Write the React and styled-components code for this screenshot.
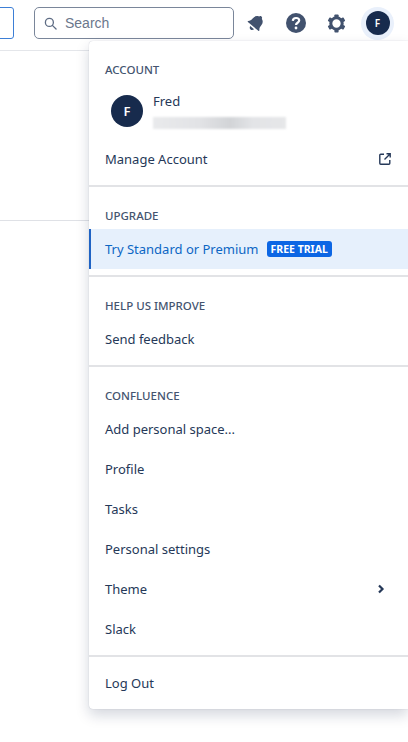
import React from "react";
import styled, { createGlobalStyle } from "styled-components";

const GlobalStyle = createGlobalStyle`
  html, body { margin: 0; padding: 0; background: #fff; }
  body { font-family: "Noto Sans", "Open Sans", "Liberation Sans", sans-serif; color: #253858; }
`;

const Page = styled.div`
  position: relative;
  width: 408px;
  height: 742px;
  overflow: hidden;
  background: #fff;
`;

const TopBar = styled.header`
  display: flex;
  align-items: flex-start;
  height: 43px;
  padding-top: 7px;
  border-bottom: 1px solid #e4e6ea;
`;

const CreateButton = styled.div`
  width: 80px;
  height: 30px;
  margin-left: -68px;
  flex: none;
  border: 1px solid #3d7fd6;
  border-radius: 3px;
`;

const SearchBox = styled.div`
  display: flex;
  align-items: center;
  gap: 8px;
  width: 200px;
  height: 32px;
  margin-left: 20px;
  padding-left: 9px;
  flex: none;
  box-sizing: border-box;
  border: 1px solid #7a869a;
  border-radius: 5px;
  font-family: "Liberation Sans", sans-serif;
  font-size: 14px;
  color: #6b778c;
`;

const IconGroup = styled.div`
  display: flex;
  align-items: center;
  height: 32px;
  margin-left: 10px;
  gap: 16px;
`;

const IconSlot = styled.span`
  display: flex;
  align-items: center;
  justify-content: center;
  width: 24px;
  height: 24px;
`;

const ProfileRing = styled.div`
  display: flex;
  align-items: center;
  justify-content: center;
  width: 33px;
  height: 33px;
  margin-left: -3px;
  border-radius: 50%;
  background: #e9f0fb;
`;

const Avatar = styled.div`
  display: flex;
  align-items: center;
  justify-content: center;
  width: ${(p) => p.$size}px;
  height: ${(p) => p.$size}px;
  border-radius: 50%;
  background: #172b4d;
  color: #fff;
  font-weight: 600;
  font-size: ${(p) => p.$font}px;
  flex: none;
`;

const ContentRule = styled.div`
  height: 1px;
  margin-top: 169px;
  background: #dfe1e6;
`;

const Menu = styled.nav`
  position: absolute;
  left: 89px;
  top: 41px;
  right: 0;
  height: 668px;
  display: flex;
  flex-direction: column;
  background: #fff;
  border-radius: 4px 0 0 4px;
  box-shadow: 0 6px 14px rgba(9, 30, 66, 0.18), 0 0 1px rgba(9, 30, 66, 0.28);
`;

const Section = styled.section`
  padding-top: ${(p) => p.$top || 20}px;
  padding-bottom: 6px;
  border-top: ${(p) => (p.$first ? "none" : "2px solid #e2e3e6")};
`;

const Heading = styled.h3`
  margin: 0 0 6px;
  padding: 0 16px;
  height: 16px;
  line-height: 17px;
  font-size: 11.5px;
  font-weight: 500;
  color: #44546f;
`;

const Item = styled.div`
  display: flex;
  align-items: center;
  justify-content: space-between;
  height: 40px;
  padding: 0 16px;
  font-size: 13px;
  color: #253858;
`;

const UpgradeItem = styled(Item)`
  justify-content: flex-start;
  gap: 8px;
  padding-left: 14px;
  border-left: 2px solid #1f63c4;
  background: #e6f0fc;
  color: #0c66c4;
`;

const Lozenge = styled.span`
  padding: 0 4px;
  height: 16px;
  line-height: 16px;
  border-radius: 3px;
  background: #0c66e4;
  color: #fff;
  font-size: 10.5px;
  font-weight: 700;
`;

const AccountRow = styled.div`
  display: flex;
  align-items: center;
  gap: 10px;
  height: 56px;
  padding: 0 16px 0 22px;
`;

const AccountText = styled.div`
  display: flex;
  flex-direction: column;
  gap: 7px;
  margin-top: -2px;
`;

const AccountName = styled.span`
  height: 18px;
  line-height: 18px;
  font-size: 13px;
  color: #253858;
`;

const BlurredEmail = styled.span`
  display: block;
  width: 133px;
  height: 12px;
  background: linear-gradient(90deg, #e9eaec 0%, #e2e3e6 35%, #d2d4d7 58%, #e3e4e7 75%, #e6e7e9 100%);
  filter: blur(1px);
`;

const ExternalSlot = styled.span`
  display: flex;
  margin-right: 1px;
`;

const ChevronSlot = styled.span`
  display: flex;
  margin-right: 7px;
`;

const BellIcon = () => (
  <svg width="20" height="20" viewBox="0 0 20 20" fill="#42526e">
    <g transform="rotate(40 10 10)">
      <path d="M10 1.500c1 0 1.700.7 1.800 1.600 2.400.7 3.700 2.600 3.700 5.200 0 2.500.5 3.800 1.800 5.100.4.5.1 1.100-.5 1.100H3.200c-.6 0-.9-.6-.5-1.100 1.300-1.300 1.800-2.600 1.800-5.100 0-2.600 1.300-4.500 3.700-5.200.1-.9.800-1.600 1.800-1.600z" />
      <path d="M7.500 16h5c-.2 1.400-1.200 2.500-2.500 2.500S7.700 17.400 7.500 16z" />
    </g>
  </svg>
);

const HelpIcon = () => (
  <svg width="20" height="20" viewBox="0 0 20 20">
    <circle cx="10" cy="10" r="10" fill="#42526e" />
    <path
      d="M6.800 7.900c.1-1.800 1.500-2.900 3.300-2.900 1.800 0 3.100 1 3.100 2.500 0 2.200-3.200 2.300-3.200 4.500"
      fill="none"
      stroke="#fff"
      strokeWidth="2.200"
    />
    <circle cx="10" cy="15" r="1.400" fill="#fff" />
  </svg>
);

const GearIcon = () => (
  <svg width="19" height="19" viewBox="0 0 20 20">
    <circle cx="10" cy="10" r="6" fill="none" stroke="#42526e" strokeWidth="3.200" />
    <g fill="#42526e">
      <rect x="7.800" y="0.500" width="4.400" height="4" rx="0.800" />
      <rect x="7.800" y="0.500" width="4.400" height="4" rx="0.800" transform="rotate(60 10 10)" />
      <rect x="7.800" y="0.500" width="4.400" height="4" rx="0.800" transform="rotate(120 10 10)" />
      <rect x="7.800" y="0.500" width="4.400" height="4" rx="0.800" transform="rotate(180 10 10)" />
      <rect x="7.800" y="0.500" width="4.400" height="4" rx="0.800" transform="rotate(240 10 10)" />
      <rect x="7.800" y="0.500" width="4.400" height="4" rx="0.800" transform="rotate(300 10 10)" />
    </g>
  </svg>
);

const SearchIcon = () => (
  <svg width="13" height="13" viewBox="0 0 14 14" fill="none" stroke="#5e6c84" strokeWidth="1.400">
    <circle cx="5.800" cy="5.800" r="4.300" />
    <path d="M9 9l4 4" strokeLinecap="round" />
  </svg>
);

const ExternalIcon = () => (
  <svg width="12" height="12" viewBox="0 0 12 12" fill="none" stroke="#253858" strokeWidth="1.400">
    <path d="M5 1.200H1.700c-.5 0-.9.4-.9.900v8.200c0 .5.4.9.9.9h8.200c.5 0 .9-.4.900-.9V7" />
    <path d="M5.500 6.500L11 1M7.500.8h3.700v3.700" />
  </svg>
);

const ChevronIcon = () => (
  <svg width="8" height="10" viewBox="0 0 8 10" fill="none" stroke="#253858" strokeWidth="2.200">
    <path d="M2 1.500L5.500 5 2 8.500" />
  </svg>
);

const confluenceItems = ["Add personal space...", "Profile", "Tasks", "Personal settings"];

export default function App() {
  return (
    <Page>
      <GlobalStyle />
      <TopBar>
        <CreateButton />
        <SearchBox>
          <SearchIcon />
          Search
        </SearchBox>
        <IconGroup>
          <IconSlot>
            <BellIcon />
          </IconSlot>
          <IconSlot>
            <HelpIcon />
          </IconSlot>
          <IconSlot>
            <GearIcon />
          </IconSlot>
          <ProfileRing>
            <Avatar $size={24} $font={10}>F</Avatar>
          </ProfileRing>
        </IconGroup>
      </TopBar>
      <ContentRule />
      <Menu>
        <Section $first>
          <Heading>ACCOUNT</Heading>
          <AccountRow>
            <Avatar $size={32} $font={13}>F</Avatar>
            <AccountText>
              <AccountName>Fred</AccountName>
              <BlurredEmail />
            </AccountText>
          </AccountRow>
          <Item>
            Manage Account
            <ExternalSlot>
              <ExternalIcon />
            </ExternalSlot>
          </Item>
        </Section>
        <Section>
          <Heading>UPGRADE</Heading>
          <UpgradeItem>
            Try Standard or Premium
            <Lozenge>FREE TRIAL</Lozenge>
          </UpgradeItem>
        </Section>
        <Section>
          <Heading>HELP US IMPROVE</Heading>
          <Item>Send feedback</Item>
        </Section>
        <Section>
          <Heading>CONFLUENCE</Heading>
          {confluenceItems.map((label) => (
            <Item key={label}>{label}</Item>
          ))}
          <Item>
            Theme
            <ChevronSlot>
              <ChevronIcon />
            </ChevronSlot>
          </Item>
          <Item>Slack</Item>
        </Section>
        <Section $top={6}>
          <Item>Log Out</Item>
        </Section>
      </Menu>
    </Page>
  );
}
